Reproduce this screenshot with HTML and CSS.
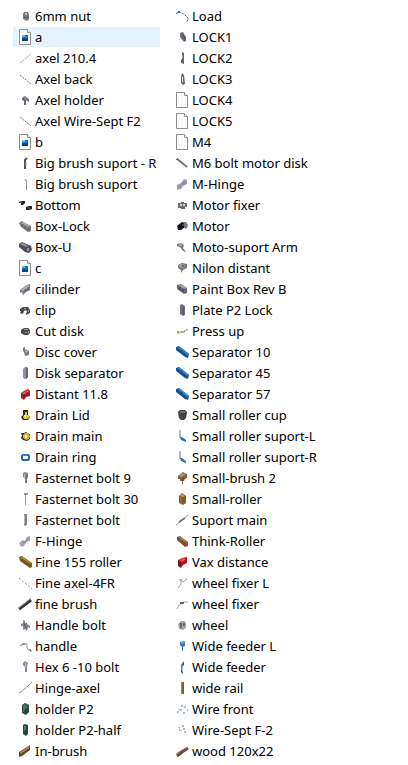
FILE: index.html
```html
<!DOCTYPE html>
<html lang="en">
<head>
  <meta charset="UTF-8" />
  <meta name="viewport" content="width=device-width, initial-scale=1.0" />
  <title>Parts</title>
  <link rel="stylesheet" href="styles.css">
</head>
<body>

  <!-- Shared icons -->
  <svg class="sprite" aria-hidden="true">
    <symbol id="page" viewBox="0 0 16 16">
      <path d="M2.5.5h8l3 3v12h-11z" fill="#fafafa" stroke="#8e8e8e"/>
      <path d="M10.500.5v3h3" fill="#fff" stroke="#8e8e8e"/>
    </symbol>
    <symbol id="picture" viewBox="0 0 16 16">
      <use href="#page"/>
      <path d="M5 6h6v6H5z" fill="#1677c8"/>
      <path d="M5 6h3v2H5z" fill="#5cc0ee"/>
      <path d="M5 10l2-1 2 1 2-2v4H5z" fill="#0b3f86"/>
    </symbol>
    <symbol id="axle" viewBox="0 0 16 16">
      <path d="M3 4l11 9" stroke="#777982" stroke-dasharray="2 1" fill="none"/>
    </symbol>
    <symbol id="separator" viewBox="0 0 16 16">
      <path d="M2 3l3-1 10 8-1 4-3-1L2 6z" fill="#155596"/>
      <path d="M3 3l2-1 10 8-2 1z" fill="#2f83cb"/>
      <path d="M4 6l1-2M7 8l1-2M10 11l1-2" stroke="#0d3c72"/>
    </symbol>
    <symbol id="bracket" viewBox="0 0 16 16">
      <path d="M6 2v8" stroke="#68768c" fill="none"/>
      <path d="M6 9l1 3 5 2v-2L8 9z" fill="#2472b4"/>
    </symbol>
  </svg>

  <main>
    <ul class="files">
      <li><a href="#"><svg viewBox="0 0 16 16"><path d="M7 4h4l1 3v4l-2 2-4-2V6z" fill="#777985"/><path d="M8 5h2v2H8z" fill="#b9bac3"/><path d="M7 9h4v1H7z" fill="#555763"/></svg>6mm nut</a></li>
      <li><a href="#" class="selected"><svg><use href="#picture"/></svg>a</a></li>
      <li><a href="#"><svg viewBox="0 0 16 16"><path d="M3 13L14 4" stroke="#a0a1a8" stroke-dasharray="2 1"/></svg>axel 210.4</a></li>
      <li><a href="#"><svg><use href="#axle"/></svg>Axel back</a></li>
      <li><a href="#"><svg viewBox="0 0 16 16"><path d="M5 6l3-2 4 3v3l-2-1-1-1v5H7V9L5 8z" fill="#666873"/><path d="M6 6l2-1 3 2-2 1z" fill="#91939e"/></svg>Axel holder</a></li>
      <li><a href="#"><svg><use href="#axle"/></svg>Axel Wire-Sept F2</a></li>
      <li><a href="#"><svg><use href="#picture"/></svg>b</a></li>
      <li><a href="#"><svg viewBox="0 0 16 16"><path d="M10 3L8 5v9" stroke="#4c505c" stroke-width="2" fill="none"/><path d="M9 7v4" stroke="#a4a7b0"/></svg>Big brush suport - R</a></li>
      <li><a href="#"><svg viewBox="0 0 16 16"><path d="M8 3l1 2 1-1M9.500 5v9" stroke="#9496a2" fill="none"/></svg>Big brush suport</a></li>
      <li><a href="#"><svg viewBox="0 0 16 16"><path d="M2 5l3-1h3v2L6 8H4V6H2zM9 10l3-1h3v3l-3 1H9z" fill="#29251f"/><path d="M3 5h2M11 11h2" stroke="#6b6354"/></svg>Bottom</a></li>
      <li><a href="#"><svg viewBox="0 0 16 16"><path d="M2 5l3-2 3 2 6 3v5l-3 1-7-5z" fill="#77797b"/><path d="M4 5l2-1 7 4-2 1z" fill="#a7a9ab"/><path d="M5 8l1-2M8 10l1-2M11 13l1-3" stroke="#55585a"/></svg>Box-Lock</a></li>
      <li><a href="#"><svg viewBox="0 0 16 16"><path d="M2 5l3-2 9 4 1 4-3 3-4-1-6-5z" fill="#4e5258"/><path d="M3 5l3-1 5 3-2 1z" fill="#8f939a"/><path d="M10 9h2v3h-2z" fill="#9397a8"/></svg>Box-U</a></li>

      <li><a href="#"><svg><use href="#picture"/></svg>c</a></li>
      <li><a href="#"><svg viewBox="0 0 16 16"><path d="M3 9l7-5 3-1v6l-4 2-3 3-1-3-2 1z" fill="#747784"/><path d="M4 9l7-5 1 2-6 4z" fill="#b1b4c2"/><path d="M8 8v3M11 6v3" stroke="#555966"/></svg>cilinder</a></li>
      <li><a href="#"><svg viewBox="0 0 16 16"><path d="M3 7l3-2h5l2 3v3l-2 1-2 1v-2l1-1-1-2-2 1-1 3-3-1 1-2H3z" fill="#484a4d"/><path d="M7 6h2v1H7zM11 8h1v2h-1z" fill="#a2a4a6"/></svg>clip</a></li>
      <li><a href="#"><svg viewBox="0 0 16 16"><path d="M4 7l3-2h4l2 2v3l-2 2H7l-3-2z" fill="#45494a"/><path d="M7 6h4v1H7zM8 9h2v1H8zM11 8h1v2h-1z" fill="#9da2a3"/></svg>Cut disk</a></li>
      <li><a href="#"><svg viewBox="0 0 16 16"><path d="M6 4l2-1v2l4 2v4l-4 1-1-4-1-1z" fill="#747783"/><path d="M8 6l3 1-1 2-2-1z" fill="#a9acb6"/></svg>Disc cover</a></li>
      <li><a href="#"><svg viewBox="0 0 16 16"><path d="M6 4l2-2h2l1 2v8l-2 2H7l-1-2z" fill="#9295a1"/><path d="M9 4l1-2 1 2v8l-2 2z" fill="#5f626e"/></svg>Disk separator</a></li>
      <li><a href="#"><svg viewBox="0 0 16 16"><path d="M4 7l3-2 4-2 2 2v5l-4 1-2 3-3-2z" fill="#a51a23"/><path d="M5 7l6-3 1 2-6 3z" fill="#df5660"/><path d="M7 8v4M10 6v4" stroke="#7d1019"/></svg>Distant 11.8</a></li>
      <li><a href="#"><svg viewBox="0 0 16 16"><path d="M6 3h5v5l2 2-2 3H6l-2-3 2-2z" fill="#2c2a25"/><path d="M8 5h2v3h2v3l-2 1H7l-1-2 1-2h1z" fill="#eac91d"/><path d="M7 8h2v2H7z" fill="#fff08d"/></svg>Drain Lid</a></li>
      <li><a href="#"><svg viewBox="0 0 16 16"><path d="M4 5h3l2-1 3 2h1v5l-3 2-4-1-2-2 1-2z" fill="#302e25"/><path d="M8 5h3l2 3-1 3-3 1-3-2V7z" fill="#d6bc24"/><path d="M8 7h2v3H8z" fill="#f5f1d8"/></svg>Drain main</a></li>
      <li><a href="#"><svg viewBox="0 0 16 16"><path d="M6 6h5l1 1v3l-1 1H6l-1-1V7z" fill="#fff" stroke="#216bad" stroke-width="2"/><path d="M6 6h4" stroke="#53a0de"/></svg>Drain ring</a></li>
      <li><a href="#"><svg viewBox="0 0 16 16"><path d="M6 3l2-1 3 1v4l-1 2v4H8V9L6 7z" fill="#848692"/><path d="M7 4h1v4H7z" fill="#bbbdc6"/><path d="M9.500 5v8" stroke="#696b77"/></svg>Fasternet bolt 9</a></li>
      <li><a href="#"><svg viewBox="0 0 16 16"><path d="M7 2h4v2H7zM8 4h1v10H8z" fill="#92949e"/></svg>Fasternet bolt 30</a></li>
      <li><a href="#"><svg viewBox="0 0 16 16"><path d="M7 2h3v10l-1 2-2-1z" fill="#80828d"/><path d="M7 3h1v9H7z" fill="#b0b2bc"/></svg>Fasternet bolt</a></li>
      <li><a href="#"><svg viewBox="0 0 16 16"><path d="M2 10l4-3 2 1 2-4 3-1v5l-4 1-2 4-3 1z" fill="#a2a7b4"/><path d="M5 9l3 1 3-5" stroke="#7d8493" fill="none"/></svg>F-Hinge</a></li>
      <li><a href="#"><svg viewBox="0 0 16 16"><path d="M2 3l3-1 10 7v4l-2 1L3 7z" fill="#77581b"/><path d="M3 3l2-1 9 7-1 1z" fill="#b08a2e"/></svg>Fine 155 roller</a></li>
      <li><a href="#"><svg viewBox="0 0 16 16"><path d="M2 3l13 11" stroke="#998d92" stroke-dasharray="2 2"/></svg>Fine axel-4FR</a></li>
      <li><a href="#"><svg viewBox="0 0 16 16"><path d="M2 13l12-9" stroke="#31323a" stroke-width="3"/><path d="M2 12l12-10" stroke="#a0a1a8"/></svg>fine brush</a></li>
      <li><a href="#"><svg viewBox="0 0 16 16"><path d="M4 7l2-1V3l2 1v3l2-2v2l3 2v2l-2-1-1 4-2-2-2 1V9H4z" fill="#808390"/><path d="M8 6v4l2 1" stroke="#575a66" fill="none"/></svg>Handle bolt</a></li>
      <li><a href="#"><svg viewBox="0 0 16 16"><path d="M3 8l3-2h4v4l2 2h2v2" stroke="#777b86" fill="none" stroke-dasharray="4 1"/><path d="M5 6h3M12 12h2" stroke="#4f535d"/></svg>handle</a></li>
      <li><a href="#"><svg viewBox="0 0 16 16"><path d="M6 4l2-2 3 2-1 3v6H8V8L6 6z" fill="#838695"/><path d="M8 4h1v4H8z" fill="#c0c2cd"/></svg>Hex 6 -10 bolt</a></li>
      <li><a href="#"><svg viewBox="0 0 16 16"><path d="M2 13l4-3 5-4 4-4" stroke="#878a95" fill="none" stroke-dasharray="4 1"/></svg>Hinge-axel</a></li>
      <li><a href="#"><svg viewBox="0 0 16 16"><path d="M5 4l3-2 4 2v7l-3 3-4-2z" fill="#28483a"/><path d="M6 4l2-1 3 2-1 2-2 1-1 3H6z" fill="#4f7561"/></svg>holder P2</a></li>
      <li><a href="#"><svg viewBox="0 0 16 16"><path d="M6 3l2-1 3 1v9l-2 2-3-2z" fill="#28483a"/><path d="M7 4h2v3L7 9z" fill="#5d806d"/></svg>holder P2-half</a></li>
      <li><a href="#"><svg viewBox="0 0 16 16"><path d="M2 9l8-5 3-2v5l-8 6-3 1z" fill="#604429"/><path d="M3 9l9-6v2L4 11z" fill="#ae8655"/></svg>In-brush</a></li>

      <!-- Second column -->
      <li><a href="#"><svg viewBox="0 0 16 16"><path d="M2 5h2l1-2 2 2M8 5l3 2M11 7l3 3v2l-2 2" stroke="#2e6796" fill="none" stroke-dasharray="2 1"/><path d="M4 3h2v2H4z" fill="#28689e"/></svg>Load</a></li>
      <li><a href="#"><svg viewBox="0 0 16 16"><path d="M6 4l3-1 3 5v4l-2 1-4-5z" fill="#70727d"/><path d="M7 4l2 2v4M9 6l2 3v3" stroke="#4d505c" fill="none"/></svg>LOCK1</a></li>
      <li><a href="#"><svg viewBox="0 0 16 16"><path d="M8 2l2 1v11l-3-1v-3l1-1z" fill="#62656f"/><path d="M8 5h1v3H8z" fill="#a9abb3"/></svg>LOCK2</a></li>
      <li><a href="#"><svg viewBox="0 0 16 16"><path d="M8 2l2 2 1 9-2 1-2-2V6z" fill="#666872"/><path d="M8 6h1v5H8z" fill="#e4e5e8"/></svg>LOCK3</a></li>
      <li><a href="#"><svg><use href="#page"/></svg>LOCK4</a></li>
      <li><a href="#"><svg><use href="#page"/></svg>LOCK5</a></li>
      <li><a href="#"><svg><use href="#page"/></svg>M4</a></li>
      <li><a href="#"><svg viewBox="0 0 16 16"><path d="M3 4l4 3 6 5" stroke="#717580" stroke-width="2" fill="none"/><path d="M2 5l2-2" stroke="#555965"/></svg>M6 bolt motor disk</a></li>
      <li><a href="#"><svg viewBox="0 0 16 16"><path d="M3 9l4-2 3-4 3 1v4l-4 2-2 3-4 1z" fill="#9da0b0"/><path d="M6 9v3M9 6v3M11 5v3" stroke="#7b7f91"/></svg>M-Hinge</a></li>
      <li><a href="#"><svg viewBox="0 0 16 16"><path d="M4 6h3V5h3v1h3v4h-2v2H7v-1H4z" fill="#696c70"/><path d="M6 7h2v2H6zM9 7h2v2H9z" fill="#d3d4d5"/></svg>Motor fixer</a></li>
      <li><a href="#"><svg viewBox="0 0 16 16"><path d="M3 8l5-4 3 1v4l-4 3H4z" fill="#121416"/><path d="M10 4h2l2 3-1 3-2 1-1-3z" fill="#717b8b"/><path d="M8 6h2v2H8z" fill="#444b51"/></svg>Motor</a></li>
      <li><a href="#"><svg viewBox="0 0 16 16"><path d="M3 5l4-1 3 2-1 3 3 4-3-1-3-4-3-1z" fill="#777a83"/><path d="M5 5l3 1-2 1" stroke="#b6b8bd" fill="none"/></svg>Moto-suport Arm</a></li>

      <li><a href="#"><svg viewBox="0 0 16 16"><path d="M4 5l4-2 5 1v4l-4 2-2 3v-3L4 8z" fill="#777879"/><path d="M5 5l4-1 2 2-2 2-3-1z" fill="#a9aaaa"/><path d="M8 5h2v2H8z" fill="#666769"/></svg>Nilon distant</a></li>
      <li><a href="#"><svg viewBox="0 0 16 16"><path d="M3 4l4-1 6 4v5l-3 1-7-5z" fill="#62667a"/><path d="M4 4l3-1 6 4-3 1z" fill="#9ea1ad"/><path d="M6 6v3M9 8v3" stroke="#414555"/></svg>Paint Box Rev B</a></li>
      <li><a href="#"><svg viewBox="0 0 16 16"><path d="M6 3l2-1 3 2v9l-2 1-3-2z" fill="#737682"/><path d="M9 5v8" stroke="#484b57"/></svg>Plate P2 Lock</a></li>
      <li><a href="#"><svg viewBox="0 0 16 16"><path d="M3 8h2v2H3z" fill="#b3892e"/><path d="M6 9h2M8 9h2M10 9l1-2h3" stroke="#716b5e" fill="none" stroke-dasharray="2 1"/><path d="M3 10h3" stroke="#d4ae51"/></svg>Press up</a></li>
      <li><a href="#"><svg><use href="#separator"/></svg>Separator 10</a></li>
      <li><a href="#"><svg><use href="#separator"/></svg>Separator 45</a></li>
      <li><a href="#"><svg><use href="#separator"/></svg>Separator 57</a></li>
      <li><a href="#"><svg viewBox="0 0 16 16"><path d="M4 5l2-2h5l2 2-1 6-2 2H7l-2-2z" fill="#414344"/><path d="M5 5l2-1h4l1 1-2 1H7z" fill="#6c6e6f"/></svg>Small roller cup</a></li>
      <li><a href="#"><svg><use href="#bracket"/></svg>Small roller suport-L</a></li>
      <li><a href="#"><svg><use href="#bracket"/></svg>Small roller suport-R</a></li>
      <li><a href="#"><svg viewBox="0 0 16 16"><path d="M4 6l5-4 4 2v4l-2 1-1 2H9v3H8v-3H6V9H4z" fill="#80634a"/><path d="M5 6l4-3 3 1-4 3z" fill="#b39169"/><path d="M9 7v4" stroke="#574334"/></svg>Small-brush 2</a></li>
      <li><a href="#"><svg viewBox="0 0 16 16"><path d="M5 5l3-3 4 3v7l-3 2-4-2z" fill="#805c25"/><path d="M6 5l2-2 3 2-2 1z" fill="#c29a51"/><path d="M7 6v7" stroke="#ad803b"/></svg>Small-roller</a></li>
      <li><a href="#"><svg viewBox="0 0 16 16"><path d="M2 13l5-4 7-6" stroke="#8d909c" fill="none"/><path d="M5 10l6-4" stroke="#747783" stroke-width="2"/></svg>Suport main</a></li>
      <li><a href="#"><svg viewBox="0 0 16 16"><path d="M3 4l3-1 8 6v4l-3 1-8-7z" fill="#785329"/><path d="M4 4l2-1 7 6-1 1z" fill="#a7814e"/><path d="M12 10h2v3h-2z" fill="#ba3b32"/></svg>Think-Roller</a></li>
      <li><a href="#"><svg viewBox="0 0 16 16"><path d="M4 6l4-2 5-1v6l-4 2-2 3-3-2z" fill="#b5141a"/><path d="M5 6l4-2 3 1-4 3z" fill="#ed545a"/><path d="M7 8v5l-3-2V7z" fill="#790e13"/></svg>Vax distance</a></li>
      <li><a href="#"><svg viewBox="0 0 16 16"><path d="M4 13l3-4V4l2 3 4-3" stroke="#999ca4" fill="none"/><path d="M5 4l2 4" stroke="#c1c2c8"/></svg>wheel fixer L</a></li>
      <li><a href="#"><svg viewBox="0 0 16 16"><path d="M3 13l2-4 5-3h4" stroke="#a2a4ab" fill="none"/><path d="M6 7h4" stroke="#62656d" stroke-width="2"/></svg>wheel fixer</a></li>
      <li><a href="#"><svg viewBox="0 0 16 16"><path d="M4 7l3-3h4l1 3v4l-3 2-4-1z" fill="#a5a6a7"/><path d="M6 6h2v5H6zM9 6h2v3H9z" fill="#66696b"/></svg>wheel</a></li>
      <li><a href="#"><svg viewBox="0 0 16 16"><path d="M6 4l5-1v5l-2 1v4H8V9L6 7z" fill="#3a79b2"/><path d="M7 4l4-1v2L7 6z" fill="#70aad7"/></svg>Wide feeder L</a></li>
      <li><a href="#"><svg viewBox="0 0 16 16"><path d="M10 2v4L8 8v3l1 2v2l-2-2V6z" fill="#28628f"/><path d="M8 6v5" stroke="#619bc5"/></svg>Wide feeder</a></li>
      <li><a href="#"><svg viewBox="0 0 16 16"><path d="M7 2h3v12H7z" fill="#75602e"/><path d="M7 2h1v12H7z" fill="#a58c50"/></svg>wide rail</a></li>
      <li><a href="#"><svg viewBox="0 0 16 16"><path d="M3 11h2M5 8v1M8 4v2M7 8v2M9 12h2M11 5v2M13 9h1" stroke="#527da2"/></svg>Wire front</a></li>
      <li><a href="#"><svg viewBox="0 0 16 16"><path d="M5 5v1M7 8v1M8 4h2M10 6v2M11 9v2M5 8h1" stroke="#577d9e"/></svg>Wire-Sept F-2</a></li>
      <li><a href="#"><svg viewBox="0 0 16 16"><path d="M3 13l5-4 6-4" stroke="#644a40" stroke-width="3" fill="none"/><path d="M2 11l6-4 6-3" stroke="#a48878" fill="none"/></svg>wood 120x22</a></li>
    </ul>
  </main>

</body>
</html>
```

FILE: styles.css
```css
* { margin: 0; padding: 0; box-sizing: border-box; }

body {
  font-family: 'Noto Sans', 'Open Sans', sans-serif;
  font-size: 13px;
  line-height: 20px;
  color: #000;
  background-color: #fff;
}

.sprite {
  display: none;
}

/* --- file list --- */
.files {
  display: grid;
  grid-template-rows: repeat(36, 20px);
  grid-auto-flow: column;
  grid-template-columns: 147px 1fr;
  gap: 1px 10px;
  padding: 6px 13px 3px;
  list-style: none;
}

.files a {
  display: flex;
  align-items: center;
  gap: 2px;
  height: 20px;
  padding-left: 4px;
  color: inherit;
  text-decoration: none;
  white-space: nowrap;
}

.files a:hover,
.files .selected {
  background-color: #e5f3ff;
}

.files svg {
  width: 16px;
  height: 16px;
  flex-shrink: 0;
}
```
